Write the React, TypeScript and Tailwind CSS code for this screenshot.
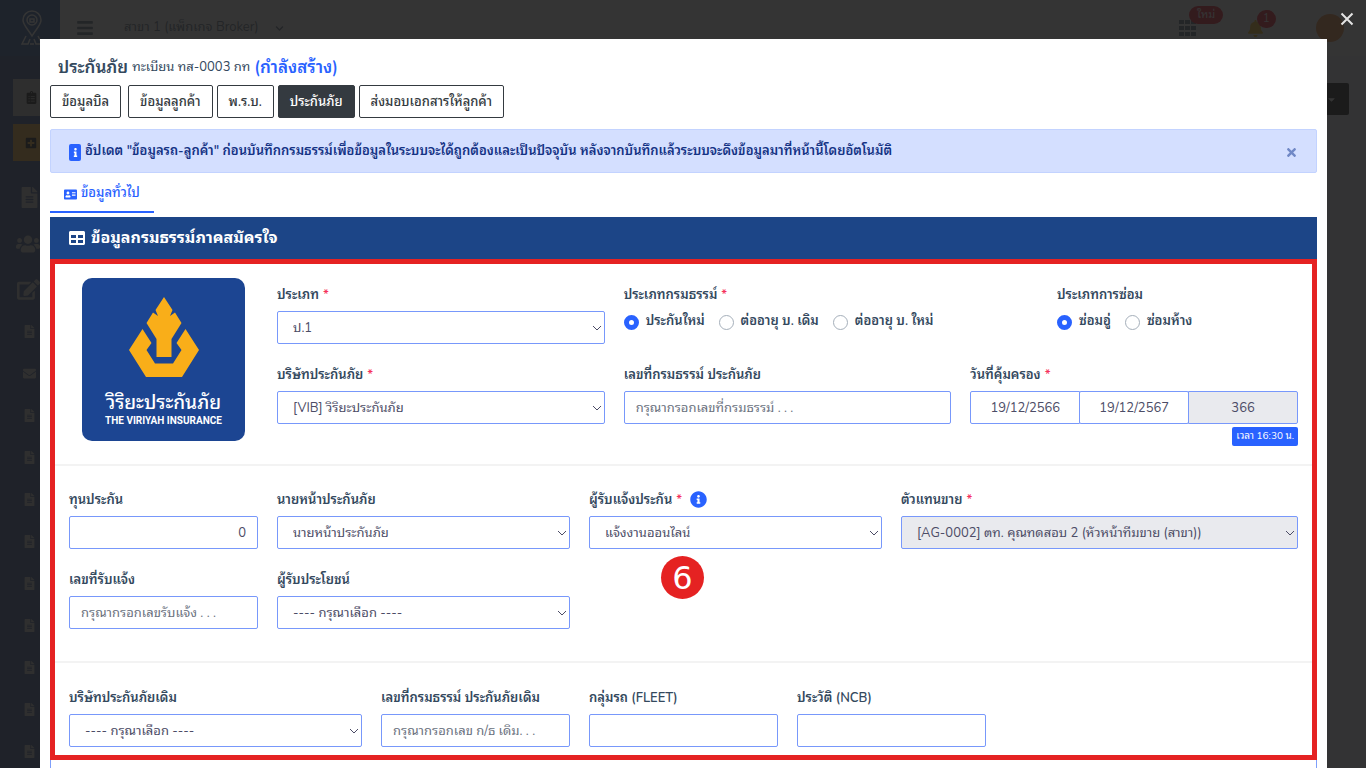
import type { ReactNode } from "react";
import {
  FaAddressCard,
  FaBars,
  FaBell,
  FaChevronDown,
  FaCaretDown,
  FaClipboardList,
  FaEdit,
  FaEnvelope,
  FaFileAlt,
  FaInfo,
  FaInfoCircle,
  FaPlusSquare,
  FaTable,
  FaTimes,
  FaUsers,
} from "react-icons/fa";

const control =
  "h-[33px] w-full rounded-xs border border-[#7898fb] bg-white text-[13px] text-[#4c4c66] disabled:bg-[#e9eaee] disabled:opacity-100";

function Label({ htmlFor, required, children }: { htmlFor?: string; required?: boolean; children: ReactNode }) {
  return (
    <label htmlFor={htmlFor} className="mb-[5px] flex h-5 items-center text-[13px] font-semibold text-[#34495e]">
      {children}
      {required && <span className="ml-1 text-[#f5325c]">*</span>}
    </label>
  );
}

type FieldProps = {
  id: string;
  label: string;
  required?: boolean;
  className: string;
};

type SelectFieldProps = FieldProps & { value: string; disabled?: boolean; hint?: boolean };

function SelectField({ id, label, required, className, value, disabled, hint }: SelectFieldProps) {
  return (
    <div className={className}>
      <div className="flex gap-2">
        <Label htmlFor={id} required={required}>
          {label}
        </Label>
        {hint && <FaInfoCircle size={17} className="text-[#2962ff]" />}
      </div>
      <div className="relative">
        <select id={id} disabled={disabled} className={`${control} appearance-none pt-0.5 pr-6 pl-[15px]`}>
          <option>{value}</option>
        </select>
        <svg viewBox="0 0 10 6" className="pointer-events-none absolute top-3.5 right-[3px] h-1.5 w-2.5" fill="none" stroke="#4c4c66">
          <path d="M1 1l4 4 4-4" />
        </svg>
      </div>
    </div>
  );
}

function TextField({ id, label, className, placeholder, value }: FieldProps & { placeholder?: string; value?: string }) {
  return (
    <div className={className}>
      <Label htmlFor={id}>{label}</Label>
      <input
        id={id}
        type="text"
        placeholder={placeholder}
        defaultValue={value}
        className={`${control} px-[11px] placeholder:text-[#6b7280] ${value ? "text-right" : ""}`}
      />
    </div>
  );
}

function RadioGroup({ name, options }: { name: string; options: string[] }) {
  return (
    <div className="flex items-center gap-3.5 pt-px">
      {options.map((option, i) => (
        <label key={option} className="flex h-5 items-center gap-[7px] text-[13px] font-semibold whitespace-nowrap text-[#34495e]">
          <input
            type="radio"
            name={name}
            defaultChecked={i === 0}
            className="size-[15px] appearance-none rounded-full border border-[#a5afba] bg-white checked:border-[5px] checked:border-[#2962ff]"
          />
          {option}
        </label>
      ))}
    </div>
  );
}

function InsurerLogo() {
  return (
    <div className="mx-auto -mt-2 flex size-[163px] flex-col items-center rounded-[10px] bg-[#1c4592] pt-[19px] text-white">
      <svg viewBox="0 0 70 80" className="h-20 w-[70px]" fill="#f9ae19">
        <path d="M35 0L43.500 13L41 19L46 15.500L52.500 26L42.500 42V60H27.500V42L17.500 26L24 15.500L29 19L26.500 13z" />
        <path d="M13.500 32L22.500 46L17.500 53L26 66.500H44L52.500 53L47.500 46L56.500 32L70 53L53 80H17L0 53z" />
      </svg>
      <div className="mt-3.5 text-[19px] leading-6 font-medium">วิริยะประกันภัย</div>
      <div className="font-['Roboto',sans-serif] text-[10px] leading-3 font-bold">THE VIRIYAH INSURANCE</div>
    </div>
  );
}

function Backdrop() {
  return (
    <div className="fixed inset-0 flex bg-[#eef5f9]" aria-hidden="true">
      <aside className="flex w-[60px] shrink-0 flex-col bg-[#2a4a8a] text-[#c8c8c8]">
        <div className="flex h-14 items-center justify-center bg-[#1f4fa0] pl-1 text-white">
          <svg viewBox="0 0 24 36" className="h-9 w-6" fill="none" stroke="currentColor" strokeWidth="1.5">
            <path d="M12 26C8 19 3 15 3 10a9 9 0 0118 0c0 5-5 9-9 16z" />
            <circle cx="12" cy="10" r="5" />
            <path d="M10 9h4v3h-4zM6 26l-4 8h6l2-5M18 26l4 8h-6l-2-5M10 34h4" />
          </svg>
        </div>
        <div className="mt-[23px] ml-[13px] flex h-[37px] items-center bg-[#c0c0c0] pl-3 text-black">
          <FaClipboardList size={13} />
        </div>
        <div className="mt-2 ml-[13px] flex h-[37px] items-center bg-[#fbb01f] pl-3 text-black">
          <FaPlusSquare size={12} />
        </div>
        <FaFileAlt size={21} className="mt-[26px] ml-[19px] shrink-0" />
        <FaUsers size={24} className="mt-6 ml-4 shrink-0" />
        <FaEdit size={23} className="mt-[22px] ml-[17px] shrink-0" />
        <div className="mt-6 flex flex-col gap-[29px] pl-[23px]">
          {Array.from({ length: 11 }, (_, i) =>
            i === 1 ? <FaEnvelope key={i} size={13} /> : <FaFileAlt key={i} size={13} />,
          )}
        </div>
      </aside>
      <div className="flex-1">
        <header className="flex h-14 items-center bg-white pr-[22px] pl-4 text-[#54667a]">
          <FaBars size={18} />
          <span className="ml-[30px] text-[13px]">สาขา 1 (แพ็กเกจ Broker)</span>
          <FaChevronDown size={9} className="ml-4" />
          <div className="relative ml-auto">
            <svg viewBox="0 0 18 16" className="h-4 w-[18px]" fill="currentColor">
              <path d="M0 0h5v4H0zM6 0h5v4H6zM12 0h5v4h-5zM0 6h5v4H0zM6 6h5v4H6zM12 6h5v4h-5zM0 12h5v4H0zM6 12h5v4H6zM12 12h5v4h-5z" />
            </svg>
            <span className="absolute -top-3.5 left-2.5 rounded-full bg-[#f5001c] px-2 text-[11px] leading-[18px] text-white">ใหม่</span>
          </div>
          <div className="relative ml-[50px]">
            <FaBell size={17} className="text-[#ffb400]" />
            <span className="absolute -top-2.5 left-2.5 rounded-full bg-[#f5001c] px-1.5 text-[11px] leading-[18px] text-white">1</span>
          </div>
          <div className="ml-[52px] size-7 rounded-full bg-[#f0802a]" />
        </header>
        <div className="mt-[27px] mr-[17px] ml-auto flex h-8 w-20 items-center justify-end rounded-xs bg-black pr-3 text-white">
          <FaCaretDown size={11} />
        </div>
      </div>
    </div>
  );
}

const steps = [
  { name: "ข้อมูลบิล", className: "mr-[3px]" },
  { name: "ข้อมูลลูกค้า", className: "" },
  { name: "พ.ร.บ.", className: "" },
  { name: "ประกันภัย", className: "", active: true },
  { name: "ส่งมอบเอกสารให้ลูกค้า", className: "" },
];

export default function App() {
  return (
    <div className="h-screen overflow-hidden font-['Nunito','Open_Sans','Noto_Sans_Thai_Looped','Loma','Waree','Garuda',sans-serif]">
      <Backdrop />
      <div className="fixed inset-0 overflow-hidden bg-[#1e1e1e]/90 pt-[39px]">
        <button type="button" aria-label="Close" className="absolute top-2.5 right-2.5 p-0.5 text-[#e4e4e4]">
          <svg viewBox="0 0 14 14" className="size-3.5" fill="none" stroke="currentColor" strokeWidth="2">
            <path d="M1.500 1.500l11 11M12.500 1.500l-11 11" />
          </svg>
        </button>

        <main className="mr-[39px] ml-10 min-h-full bg-white px-2.5 pt-[15px]">
          <h1 className="flex h-7 items-center gap-1 pl-2 text-[17px] font-semibold text-[#34495e]">
            ประกันภัย
            <small className="text-[13px] font-normal">ทะเบียน ทส-0003 กท</small>
            <span className="text-[#2962ff]">(กำลังสร้าง)</span>
          </h1>

          <nav className="mt-[3px] flex gap-1">
            {steps.map((step) => (
              <button
                key={step.name}
                type="button"
                className={`${step.className} h-[33px] rounded-xs border border-[#343a40] px-[11px] pt-0.5 text-[13px] font-medium whitespace-nowrap ${
                  step.active ? "bg-[#343a40] text-white" : "bg-white text-[#343a40]"
                }`}
              >
                {step.name}
              </button>
            ))}
          </nav>

          <div className="mt-[11px] flex h-11 items-center rounded-xs border border-[#c3d3ff] bg-[#d4dfff] pt-0.5 pr-[18px] pl-[18px] text-[13px] font-semibold text-[#153385]">
            <span className="mr-1 flex h-[17px] w-3 items-center justify-center rounded-xs bg-[#2962ff] text-white">
              <FaInfo size={9} />
            </span>
            อัปเดต "ข้อมูลรถ-ลูกค้า" ก่อนบันทึกกรมธรรม์เพื่อข้อมูลในระบบจะได้ถูกต้องและเป็นปัจจุบัน หลังจากบันทึกแล้วระบบจะดึงข้อมูลมาที่หน้านี้โดยอัตโนมัติ
            <button type="button" aria-label="Dismiss" className="ml-auto text-[#7088c6]">
              <FaTimes size={13} />
            </button>
          </div>

          <a href="#general" className="inline-flex h-10 items-center gap-1 border-b-2 border-[#2962ff] px-3.5 pt-1 text-[13px] font-medium text-[#2962ff]">
            <FaAddressCard size={13} />
            ข้อมูลทั่วไป
          </a>

          <h2 className="mt-1 flex h-[42px] items-center gap-1.5 bg-[#1c4587] pl-[19px] text-base font-bold text-white">
            <FaTable size={16} />
            ข้อมูลกรมธรรม์ภาคสมัครใจ
          </h2>

          <form className="relative border-[5px] border-[#e52222]">
            <section className="grid grid-cols-12 gap-x-[19px] border-b-2 border-[#f3f3f3] px-3.5 pt-[22px]">
              <div className="col-span-2">
                <InsurerLogo />
              </div>
              <div className="col-span-10 grid grid-cols-12 gap-x-[19px]">
                <SelectField id="type" label="ประเภท" required value="ป.1" className="col-span-4 mb-[22px]" />
                <div className="col-span-5">
                  <Label required>ประเภทกรมธรรม์</Label>
                  <RadioGroup name="policy" options={["ประกันใหม่", "ต่ออายุ บ. เดิม", "ต่ออายุ บ. ใหม่"]} />
                </div>
                <div className="col-span-3">
                  <Label>ประเภทการซ่อม</Label>
                  <RadioGroup name="repair" options={["ซ่อมอู่", "ซ่อมห้าง"]} />
                </div>
                <SelectField id="company" label="บริษัทประกันภัย" required value="[VIB] วิริยะประกันภัย" className="col-span-4" />
                <TextField id="policyNo" label="เลขที่กรมธรรม์ ประกันภัย" placeholder="กรุณากรอกเลขที่กรมธรรม์ . . ." className="col-span-4" />
                <div className="col-span-4">
                  <Label htmlFor="start" required>
                    วันที่คุ้มครอง
                  </Label>
                  <div className="flex -space-x-px">
                    <input id="start" defaultValue="19/12/2566" className={`${control} min-w-0 rounded-r-none text-center`} />
                    <input aria-label="สิ้นสุด" defaultValue="19/12/2567" className={`${control} min-w-0 rounded-none text-center`} />
                    <input aria-label="จำนวนวัน" disabled defaultValue="366" className={`${control} min-w-0 rounded-l-none text-center`} />
                  </div>
                  <div className="mt-[3px] mb-[18px] flex justify-end">
                    <span className="h-[19px] rounded-xs bg-[#2962ff] px-1 text-[10px] leading-[19px] text-white">เวลา 16:30 น.</span>
                  </div>
                </div>
              </div>
            </section>

            <section className="grid grid-cols-12 gap-x-[19px] gap-y-[22px] border-b-2 border-[#f3f3f3] px-3.5 pt-[25px] pb-8">
              <TextField id="sum" label="ทุนประกัน" value="0" className="col-span-2" />
              <SelectField id="broker" label="นายหน้าประกันภัย" value="นายหน้าประกันภัย" className="col-span-3" />
              <SelectField id="receiver" label="ผู้รับแจ้งประกัน" required hint value="แจ้งงานออนไลน์" className="col-span-3" />
              <SelectField id="agent" label="ตัวแทนขาย" required disabled value="[AG-0002] ตท. คุณทดสอบ 2 (หัวหน้าทีมขาย (สาขา))" className="col-span-4" />
              <TextField id="noticeNo" label="เลขที่รับแจ้ง" placeholder="กรุณากรอกเลขรับแจ้ง . . ." className="col-span-2" />
              <SelectField id="beneficiary" label="ผู้รับประโยชน์" value="---- กรุณาเลือก ----" className="col-span-3" />
            </section>

            <section className="grid grid-cols-12 gap-x-[19px] px-3.5 pt-[26px] pb-2">
              <SelectField id="oldCompany" label="บริษัทประกันภัยเดิม" value="---- กรุณาเลือก ----" className="col-span-3" />
              <TextField id="oldPolicy" label="เลขที่กรมธรรม์ ประกันภัยเดิม" placeholder="กรุณากรอกเลข ก/ธ เดิม. . ." className="col-span-2" />
              <TextField id="fleet" label="กลุ่มรถ (FLEET)" className="col-span-2" />
              <TextField id="ncb" label="ประวัติ (NCB)" className="col-span-2" />
            </section>

            <span className="absolute top-[292px] left-[606px] flex size-[43px] items-center justify-center rounded-full bg-[#e52222] font-['DejaVu_Sans',sans-serif] text-[32px] leading-none text-white">
              6
            </span>
          </form>
          <div className="h-10 border-x border-[#7f9ffb]" />
        </main>
      </div>
    </div>
  );
}
